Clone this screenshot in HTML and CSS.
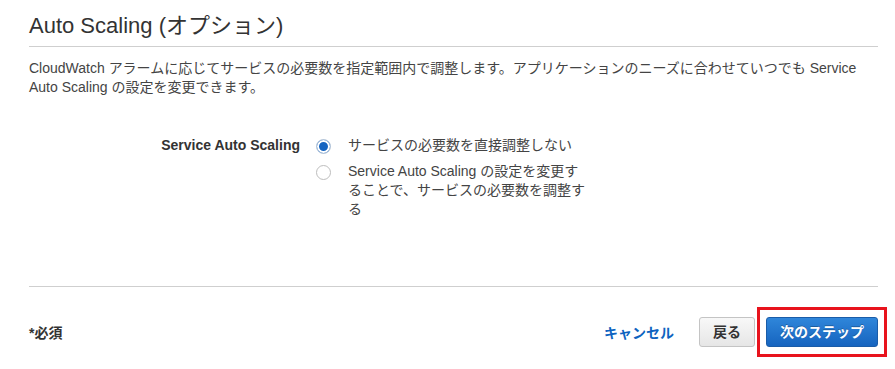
FILE: index.html
```html
<!DOCTYPE html>
<html lang="ja">
<head>
<meta charset="utf-8">
<link rel="stylesheet" href="styles.css">
</head>
<body>
<div class="page">
  <h1 class="title">Auto Scaling (オプション)</h1>
  <p class="desc">CloudWatch アラームに応じてサービスの必要数を指定範囲内で調整します。アプリケーションのニーズに合わせていつでも Service Auto Scaling の設定を変更できます。</p>
  <div class="form-row">
    <div class="form-label">Service Auto Scaling</div>
    <div class="options">
      <label class="option">
        <span class="radio checked"></span>
        <span class="option-text">サービスの必要数を直接調整しない</span>
      </label>
      <label class="option">
        <span class="radio"></span>
        <span class="option-text">Service Auto Scaling の設定を変更することで、サービスの必要数を調整する</span>
      </label>
    </div>
  </div>
  <div class="footer">
    <div class="required">*必須</div>
    <div class="actions">
      <a class="cancel" href="#">キャンセル</a>
      <button class="btn btn-back" type="button">戻る</button>
      <div class="highlight-wrap">
        <button class="btn btn-primary" type="button">次のステップ</button>
        <div class="highlight"></div>
      </div>
    </div>
  </div>
</div>
</body>
</html>
```

FILE: styles.css
```css
html, body {
  margin: 0;
  padding: 0;
  background: #ffffff;
}

html {
  min-height: 100%;
}

body {
  font-family: "Liberation Sans", "Noto Sans CJK JP", sans-serif;
  color: #444444;
  font-size: 14px;
}

.page {
  padding: 13px 17px 22px 29px;
  min-height: 334px;
}

.title {
  margin: 0;
  font-size: 22px;
  font-weight: normal;
  line-height: 26px;
  color: #333333;
  padding-bottom: 7px;
  border-bottom: 1px solid #cfcfcf;
}

.desc {
  margin: 12px 0 0 0;
  line-height: 19px;
  color: #444444;
}

.form-row {
  display: grid;
  grid-template-columns: 271px auto;
  column-gap: 16px;
  margin-top: 39px;
  padding-bottom: 67px;
  border-bottom: 1px solid #cfcfcf;
}

.form-label {
  text-align: right;
  font-weight: bold;
  color: #333333;
  line-height: 19px;
}

.options {
  display: flex;
  flex-direction: column;
  gap: 7px;
}

.option {
  display: flex;
  align-items: flex-start;
  gap: 17px;
  line-height: 19px;
  color: #444444;
}

.radio {
  flex: 0 0 auto;
  width: 15px;
  height: 15px;
  box-sizing: border-box;
  border: 1px solid #bdbdbd;
  border-radius: 50%;
  background: #ffffff;
  margin-top: 3px;
}

.radio.checked {
  border-color: #c3cedb;
  background: #1665c1;
  box-shadow: inset 0 0 0 2px #ffffff;
}

.option-text {
  flex: 0 0 240px;
  width: 240px;
}

.footer {
  display: flex;
  align-items: center;
  justify-content: space-between;
  padding-top: 30px;
  height: 30px;
}

.required {
  font-weight: bold;
  color: #333333;
}

.actions {
  display: flex;
  align-items: center;
  height: 30px;
}

.cancel {
  color: #0d63c0;
  font-weight: bold;
  text-decoration: none;
  margin-right: 25px;
}

.btn {
  display: block;
  height: 30px;
  box-sizing: border-box;
  margin: 0;
  padding: 0 13px;
  font-family: "Liberation Sans", "Noto Sans CJK JP", sans-serif;
  font-size: 14px;
  font-weight: bold;
  border-radius: 3px;
  line-height: 28px;
  cursor: pointer;
}

.btn-back {
  color: #333333;
  background: linear-gradient(#f8f8f8, #e6e6e6);
  border: 1px solid #c4c4c4;
  margin-right: 11px;
}

.highlight-wrap {
  position: relative;
  height: 30px;
}

.btn-primary {
  color: #ffffff;
  background: linear-gradient(#2f86da, #1664bf);
  border: 1px solid #1a5ca8;
  text-shadow: 0 -1px 0 rgba(0, 0, 0, 0.25);
}

.highlight {
  position: absolute;
  left: -9px;
  right: -9px;
  top: -10px;
  bottom: -10px;
  border: 3px solid #e8131d;
  pointer-events: none;
}
```
